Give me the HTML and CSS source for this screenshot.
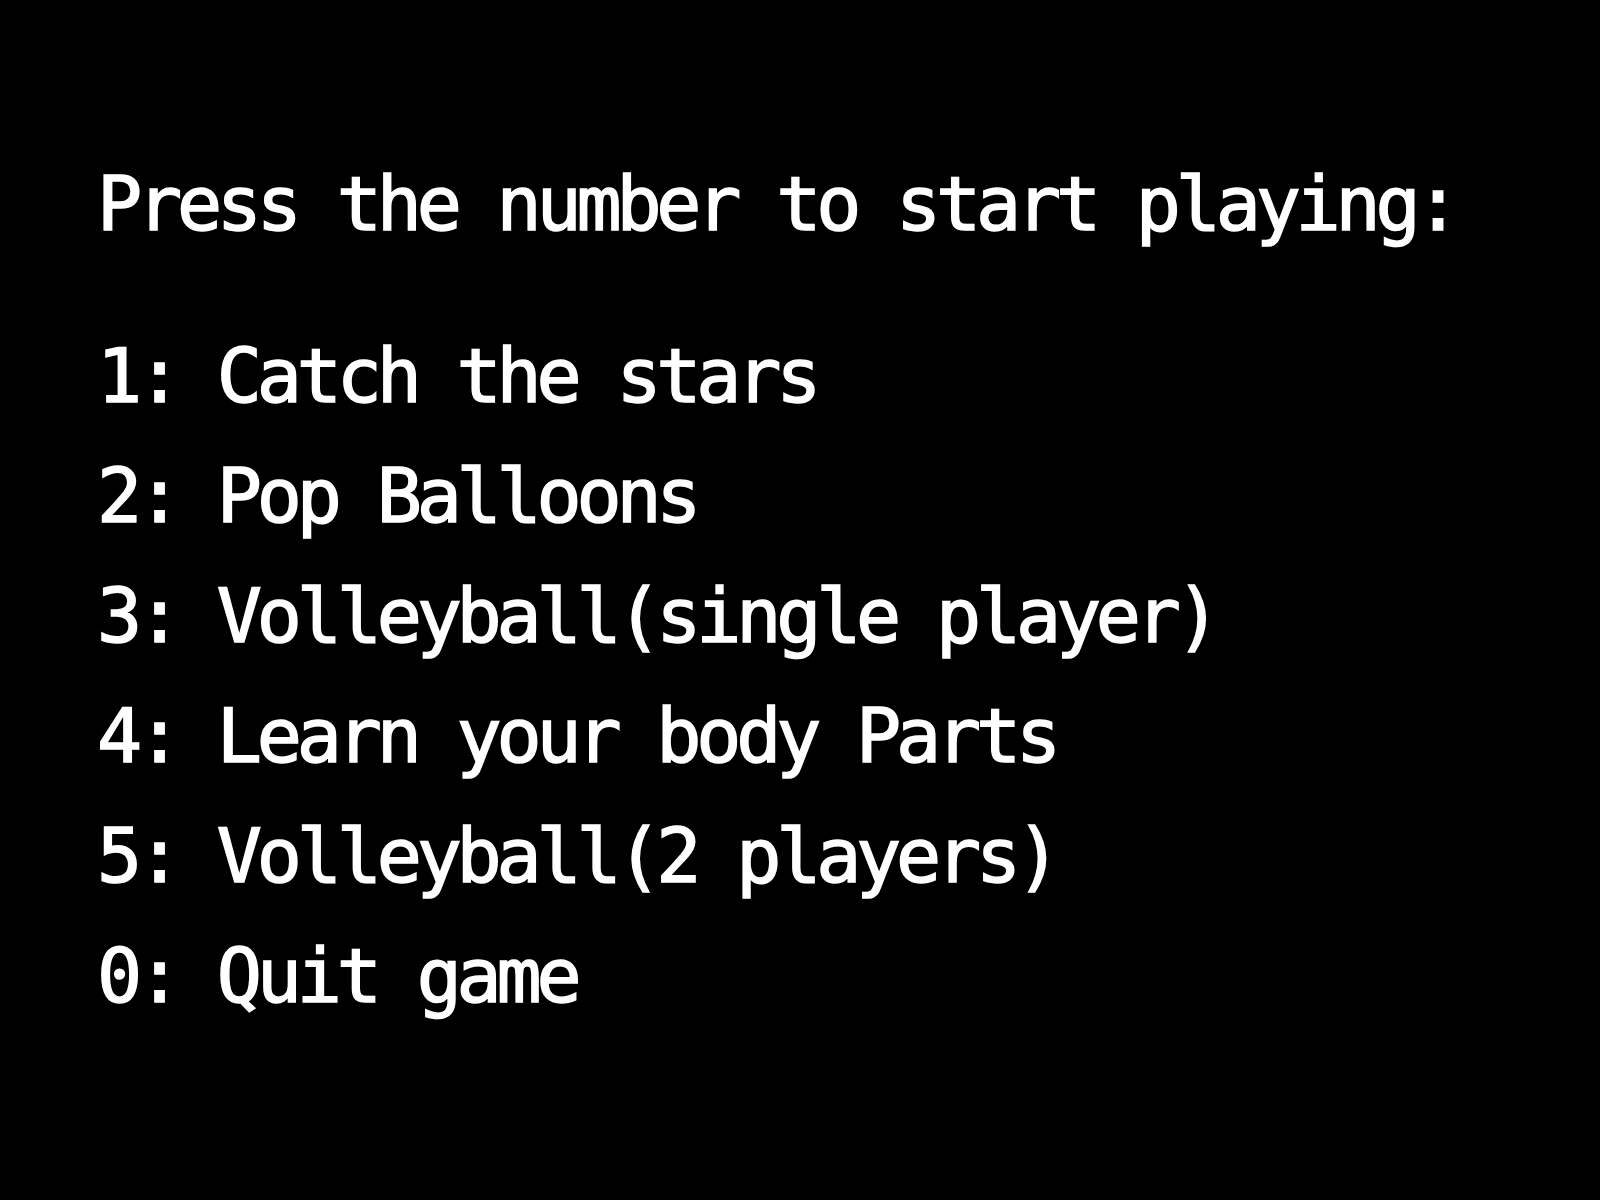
FILE: index.html
```
<!DOCTYPE html>
<html>
<head>
<meta charset="utf-8">
<link rel="stylesheet" href="styles.css">
</head>
<body>
<main class="screen">
  <div class="title">Press the number to start playing:</div>
  <ul class="menu">
    <li>1: Catch the stars</li>
    <li>2: Pop Balloons</li>
    <li>3: Volleyball(single player)</li>
    <li>4: Learn your body Parts</li>
    <li>5: Volleyball(2 players)</li>
    <li>0: Quit game</li>
  </ul>
</main>
</body>
</html>
```
FILE: styles.css
```
html, body {
  margin: 0;
  padding: 0;
  background: #000;
}
.screen {
  width: 1600px;
  height: 1200px;
  box-sizing: border-box;
  padding: 144px 0 0 97px;
  color: #fff;
  font-family: "DejaVu Sans Mono", "Liberation Mono", monospace;
  font-weight: normal;
  font-size: 75px;
  letter-spacing: -5.2px;
  line-height: 120px;
  -webkit-text-stroke: 1.5px #fff;
}
.title {
  margin: 0 0 52px 0;
  white-space: pre;
}
.menu {
  list-style: none;
  margin: 0;
  padding: 0;
}
.menu li {
  white-space: pre;
}
```
